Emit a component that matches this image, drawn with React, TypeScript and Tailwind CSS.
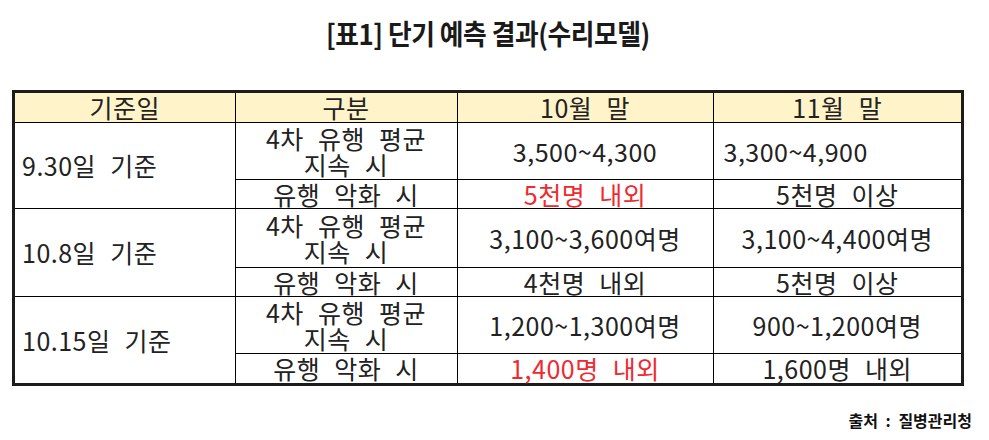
import React from "react";

const font = { fontFamily: '"Noto Sans CJK KR", "Noto Sans", sans-serif' };

type Cell = { text: string; red?: boolean; left?: boolean };

const groups: {
  date: string;
  rows: { label: string[]; c3: Cell; c4: Cell; h: string }[];
}[] = [
  {
    date: "9.30일 기준",
    rows: [
      { label: ["4차 유행 평균", "지속 시"], c3: { text: "3,500~4,300" }, c4: { text: "3,300~4,900", left: true }, h: "h-[57px]" },
      { label: ["유행 악화 시"], c3: { text: "5천명 내외", red: true }, c4: { text: "5천명 이상" }, h: "h-[29px]" },
    ],
  },
  {
    date: "10.8일 기준",
    rows: [
      { label: ["4차 유행 평균", "지속 시"], c3: { text: "3,100~3,600여명" }, c4: { text: "3,100~4,400여명" }, h: "h-[59px]" },
      { label: ["유행 악화 시"], c3: { text: "4천명 내외" }, c4: { text: "5천명 이상" }, h: "h-[29px]" },
    ],
  },
  {
    date: "10.15일 기준",
    rows: [
      { label: ["4차 유행 평균", "지속 시"], c3: { text: "1,200~1,300여명" }, c4: { text: "900~1,200여명" }, h: "h-[57px]" },
      { label: ["유행 악화 시"], c3: { text: "1,400명 내외", red: true }, c4: { text: "1,600명 내외" }, h: "h-[30px]" },
    ],
  },
];

function ValueCell({ c }: { c: Cell }) {
  return (
    <td
      className={`border border-black p-0 align-middle whitespace-nowrap ${
        c.left ? "text-left pl-[10px]" : "text-center"
      } ${c.red ? "text-[#ee2a30]" : "text-[#222222]"}`}
    >
      {c.text}
    </td>
  );
}

export default function App() {
  return (
    <div className="w-[989px] h-[440px] bg-white overflow-hidden" style={font}>
      <div className="ml-[12px] w-[952px]">
        <div className="h-[66px] flex items-center justify-center">
          <div className="text-[28px] font-bold text-[#1a1a1a] scale-x-[0.92] leading-none tracking-[-0.5px]">
            [표1] 단기 예측 결과(수리모델)
          </div>
        </div>
        <div className="mt-[24px] border-[3px] border-[#1c1c1c]">
          <table className="w-full table-fixed border-collapse border-hidden text-[25px] leading-[26px] tracking-[0.5px] [word-spacing:8px] text-[#222222]">
            <colgroup>
              <col className="w-[220px]" />
              <col className="w-[222px]" />
              <col className="w-[256px]" />
              <col className="w-[248px]" />
            </colgroup>
            <thead>
              <tr className="h-[29px] bg-[#fff4c9]">
                {["기준일", "구분", "10월 말", "11월 말"].map((t) => (
                  <th key={t} className="border border-black p-0 font-normal text-center align-middle">
                    {t}
                  </th>
                ))}
              </tr>
            </thead>
            <tbody>
              {groups.map((g) =>
                g.rows.map((r, i) => (
                  <tr key={g.date + i} className={r.h}>
                    {i === 0 && (
                      <td rowSpan={2} className="border border-black p-0 pl-[7px] text-left align-middle whitespace-nowrap">
                        {g.date}
                      </td>
                    )}
                    <td className="border border-black p-0 text-center align-middle whitespace-nowrap">
                      {r.label.length > 1 ? (
                        <>
                          {r.label[0]}
                          <br />
                          {r.label[1]}
                        </>
                      ) : (
                        r.label[0]
                      )}
                    </td>
                    <ValueCell c={r.c3} />
                    <ValueCell c={r.c4} />
                  </tr>
                ))
              )}
            </tbody>
          </table>
        </div>
      </div>
      <div className="mt-[22px] pr-[17px] flex justify-end">
        <span className="text-[16px] font-bold text-[#111111] [word-spacing:4px]">출처 : 질병관리청</span>
      </div>
    </div>
  );
}
